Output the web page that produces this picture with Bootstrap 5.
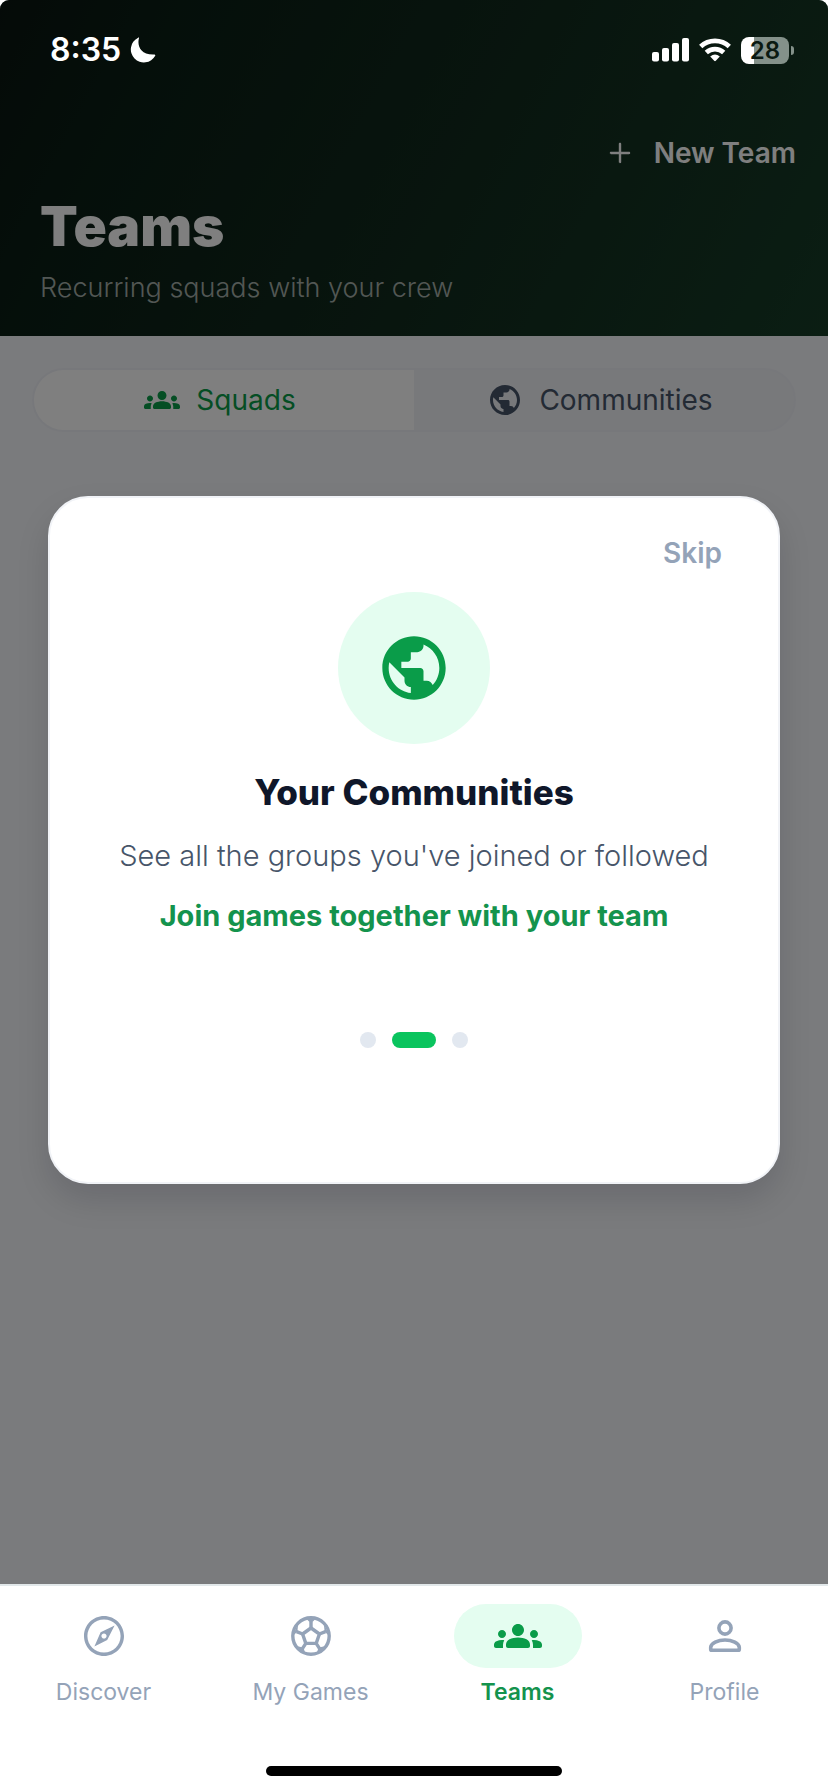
<!DOCTYPE html>
<html lang="en">
<head>
<meta charset="utf-8">
<meta name="viewport" content="width=device-width, initial-scale=1">
<title>Teams</title>
<link href="https://cdn.jsdelivr.net/npm/bootstrap@5.3.0/dist/css/bootstrap.min.css" rel="stylesheet">
<style>
  :root { --green: #0a9c49; --mint: #e4fdf0; --slate: #94a3b8; }
  body { font-family: Inter, "Liberation Sans", sans-serif; font-size: 29px; line-height: 40px; background: #fff; }
  svg { display: block; fill: currentColor; flex: none; }
  .screen { background: #f5f6fa; border-radius: 9px 9px 0 0; }
  .hero { background: linear-gradient(118deg, #0a1510 0%, #0a1e15 18%, #10291c 52%, #163c27 100%); color: #fff; padding: 0 32px 30px 40px; }
  .status { z-index: 20; height: 96px; padding: 4px 34px 0 50px; color: #fff; font-size: 32px; font-weight: 600; }
  .battery { width: 48px; height: 27px; border-radius: 8px; font-size: 24px; line-height: 27px; font-weight: 600; color: #0a1a12;
    background: linear-gradient(90deg, #fff 28%, #84918a 28%); }
  .nub { width: 3px; height: 9px; margin-left: 2px; border-radius: 0 4px 4px 0; background: #84918a; }
  .toolbar { padding-top: 121px; }
  .new-team { height: 64px; font-size: 28px; font-weight: 600; color: #fff; }
  .hero h1 { font-size: 55px; line-height: 64px; font-weight: 900; margin: 9px 0 12px; }
  .hero p { font-size: 27px; line-height: 36px; font-weight: 300; color: #a5aea9; }
  .segments { margin: 32px 32px 0; height: 64px; border: 2px solid #eff1f7; border-radius: 32px; background: #f0f2f7; }
  .segments .btn { font-size: 28px; gap: 16px; color: #475569; border: 0; border-radius: 0; padding: 0 8px 0 0; }
  .segments .btn.active { background: #fff; color: var(--green); }
  .scrim { z-index: 10; background: rgba(0, 0, 0, .5); padding: 96px 48px 0; }
  .tour { min-height: 688px; border: 2px solid #f1f3f7; border-radius: 40px; padding: 30px 56px; background: #fff; box-shadow: 0 16px 32px rgba(0, 0, 20, .13); }
  .skip { font-size: 28px; font-weight: 600; line-height: 50px; color: var(--slate); margin-bottom: 14px; }
  .disc { width: 152px; height: 152px; background: var(--mint); color: var(--green); }
  .tour h2 { font-size: 35px; line-height: 48px; font-weight: 800; color: #0f172a; margin: 24px 0 20px; }
  .tour p { margin-bottom: 20px; font-weight: 300; color: #475569; }
  .tour .join { color: #14934d; font-weight: 700; margin-bottom: 96px; }
  .dot { width: 16px; height: 16px; border-radius: 8px; background: #e2e8f0; }
  .dot.on { width: 44px; background: #0ac45e; }
  .tabbar { border-top: 2px solid #e2e8ea; padding-top: 18px; }
  .tabbar a { color: var(--slate); font-size: 23px; line-height: 28px; text-decoration: none; }
  .tabbar a.active { color: #14934d; font-weight: 600; }
  .pill { width: 128px; height: 64px; border-radius: 32px; margin-bottom: 10px; }
  .active .pill { background: var(--mint); color: var(--green); }
  .home { width: 296px; height: 10px; border-radius: 5px; background: #000; margin: 60px auto 16px; }
</style>
</head>
<body class="min-vh-100 d-flex flex-column">
<svg class="d-none" aria-hidden="true">
  <symbol id="globe" viewBox="0 0 24 24"><path d="M12 2C6.48 2 2 6.48 2 12s4.48 10 10 10 10-4.48 10-10S17.52 2 12 2zm-1 17.93c-3.95-.49-7-3.85-7-7.93 0-.62.08-1.21.21-1.79L9 15v1c0 1.1.9 2 2 2v1.93zm6.9-2.54c-.26-.81-1-1.39-1.9-1.39h-1v-3c0-.55-.45-1-1-1H8v-2h2c.55 0 1-.45 1-1V7h2c1.1 0 2-.9 2-2v-.41c2.93 1.19 5 4.06 5 7.41 0 2.08-.8 3.97-2.1 5.39z"/></symbol>
  <symbol id="groups" viewBox="0 0 24 24"><path d="M12 12.75c1.63 0 3.07.39 4.24.9 1.08.48 1.76 1.56 1.76 2.73V17c0 .55-.45 1-1 1H7c-.55 0-1-.45-1-1v-.61c0-1.18.68-2.26 1.76-2.73 1.17-.52 2.61-.91 4.24-.91zM4 13c1.1 0 2-.9 2-2s-.9-2-2-2-2 .9-2 2 .9 2 2 2zm1.13 1.1c-.37-.06-.74-.1-1.13-.1-.99 0-1.93.21-2.78.58C.48 14.9 0 15.62 0 16.43V17c0 .55.45 1 1 1h3.5v-1.61c0-.83.23-1.61.63-2.29zM20 13c1.1 0 2-.9 2-2s-.9-2-2-2-2 .9-2 2 .9 2 2 2zm4 3.43c0-.81-.48-1.53-1.22-1.85-.85-.37-1.79-.58-2.78-.58-.39 0-.76.04-1.13.1.4.68.63 1.46.63 2.29V18H23c.55 0 1-.45 1-1v-.57zM12 6c1.66 0 3 1.34 3 3s-1.34 3-3 3-3-1.34-3-3 1.34-3 3-3z"/></symbol>
</svg>

<header class="status position-absolute top-0 start-0 w-100 d-flex align-items-center">
  <span>8:35</span>
  <svg class="ms-2" width="27" height="27" viewBox="0 0 27 27" aria-hidden="true"><path d="M10 1C8 8 11 18 25 17.500c1-.1 1.600.2 1.200 1.200A13 13 0 1 1 8.800.9C9.700.3 10.200.4 10 1z"/></svg>
  <div class="ms-auto d-flex align-items-center">
    <svg width="37" height="24" viewBox="0 0 37 24" aria-label="Signal"><rect y="14" width="7" height="9.500" rx="2"/><rect x="10" y="10" width="7" height="13.500" rx="2"/><rect x="20" y="5" width="7" height="18.500" rx="2"/><rect x="30" width="7" height="23.500" rx="2"/></svg>
    <svg class="mx-2" width="36" height="24" viewBox="-17 0 34 24" aria-label="Wi-Fi"><g fill="none" stroke="#fff" stroke-width="4.800"><path d="M-14.300 8.500A21 21 0 0 1 14.300 8.500"/><path d="M-8.700 14.500A13 13 0 0 1 8.700 14.500"/></g><path d="M-4.800 18.500Q0 14.500 4.800 18.500L.8 22.800Q0 23.500-.8 22.800Z"/></svg>
    <span class="battery text-center">28</span><span class="nub"></span>
  </div>
</header>

<main class="screen position-relative flex-grow-1 overflow-hidden">
  <section class="hero">
    <div class="toolbar d-flex justify-content-end">
      <button type="button" class="new-team btn p-0 border-0 d-flex align-items-center gap-3">
        <svg width="36" height="36" viewBox="0 0 24 24" aria-hidden="true"><path d="M18 12.800h-5.200V18c0 .5-.3.800-.8.800s-.8-.3-.8-.8v-5.200H6c-.5 0-.8-.3-.8-.8s.3-.8.8-.8h5.200V6c0-.5.3-.8.8-.8s.8.3.8.800v5.200H18c.5 0 .8.3.8.8s-.3.800-.8.800z"/></svg>
        New Team
      </button>
    </div>
    <h1>Teams</h1>
    <p class="mb-0">Recurring squads with your crew</p>
  </section>

  <div class="segments d-flex overflow-hidden">
    <button type="button" class="btn active w-50 d-flex align-items-center justify-content-center"><svg width="36" height="36" aria-hidden="true"><use href="#groups"/></svg>Squads</button>
    <button type="button" class="btn w-50 d-flex align-items-center justify-content-center"><svg width="36" height="36" aria-hidden="true"><use href="#globe"/></svg>Communities</button>
  </div>

  <div class="scrim position-absolute top-0 start-0 w-100 h-100 d-flex align-items-center">
    <section class="tour w-100 d-flex flex-column align-items-center text-center" role="dialog" aria-labelledby="tour-title">
      <button type="button" class="skip btn p-0 border-0 align-self-end">Skip</button>
      <div class="disc rounded-circle d-flex align-items-center justify-content-center"><svg width="76" height="76" aria-hidden="true"><use href="#globe"/></svg></div>
      <h2 id="tour-title">Your Communities</h2>
      <p>See all the groups you've joined or followed</p>
      <p class="join">Join games together with your team</p>
      <div class="d-flex gap-3"><span class="dot"></span><span class="dot on"></span><span class="dot"></span></div>
    </section>
  </div>
</main>

<footer class="bg-white">
  <nav class="tabbar row g-0 text-center" aria-label="Main">
    <a href="#" class="col d-flex flex-column align-items-center"><span class="pill d-flex align-items-center justify-content-center"><svg width="48" height="48" viewBox="0 0 24 24" aria-hidden="true"><path fill-rule="evenodd" d="M12 2C6.480 2 2 6.480 2 12s4.480 10 10 10 10-4.480 10-10S17.520 2 12 2zm0 18.300c-4.600 0-8.300-3.700-8.300-8.300S7.400 3.700 12 3.700s8.300 3.700 8.300 8.300-3.700 8.300-8.300 8.300zM7.200 17.200l6.400-3.200 3.700-7.300-7 3.400zM12 10.700c.720 0 1.300.580 1.300 1.300s-.580 1.300-1.300 1.300-1.300-.580-1.300-1.300.580-1.300 1.300-1.300z"/></svg></span>Discover</a>
    <a href="#" class="col d-flex flex-column align-items-center"><span class="pill d-flex align-items-center justify-content-center"><svg width="48" height="48" viewBox="0 0 24 24" aria-hidden="true"><g fill="none" stroke="currentColor" stroke-width="1.700" stroke-linejoin="round"><circle cx="12" cy="12" r="9.100"/><path d="m12 8 4.200 3-1.600 4.700H9.400L7.800 11z"/><path d="M12 8V5M16.200 11l3-1.200M14.600 15.700l1.700 2.600M9.400 15.700l-1.700 2.600M7.800 11l-3-1.200"/></g><path d="M9.300 3 12 5.700 14.700 3zM18.400 5.600 18.800 9.900 21.200 12zM5.600 5.600 5.200 9.900 2.800 12zM19.500 17 15.800 17.800 14.700 21zM4.500 17 8.200 17.800 9.300 21z"/></svg></span>My Games</a>
    <a href="#" class="col d-flex flex-column align-items-center active" aria-current="page"><span class="pill d-flex align-items-center justify-content-center"><svg width="48" height="48" aria-hidden="true"><use href="#groups"/></svg></span>Teams</a>
    <a href="#" class="col d-flex flex-column align-items-center"><span class="pill d-flex align-items-center justify-content-center"><svg width="48" height="48" viewBox="0 0 24 24" aria-hidden="true"><g fill="none" stroke="currentColor" stroke-width="1.800"><circle cx="12" cy="8" r="3.050"/><path d="M12 14c-3.500 0-7.150 1.700-7.150 3.800V18.600c0 .35.200.55.550.55h13.200c.35 0 .55-.2.550-.55V17.800C19.150 15.700 15.500 14 12 14z"/></g></svg></span>Profile</a>
  </nav>
  <div class="home"></div>
</footer>
<script src="https://cdn.jsdelivr.net/npm/bootstrap@5.3.0/dist/js/bootstrap.bundle.min.js"></script>
</body>
</html>
